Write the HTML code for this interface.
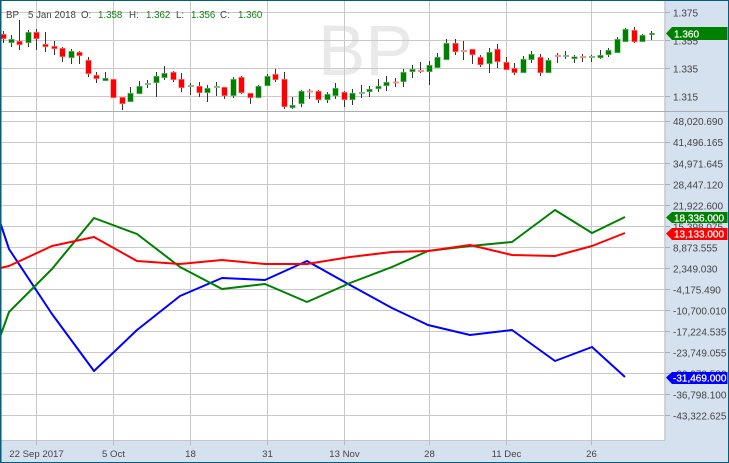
<!DOCTYPE html>
<html>
<head>
<meta charset="utf-8">
<style>
html,body{margin:0;padding:0;background:#fff;width:729px;height:463px;overflow:hidden}
svg{display:block}
text{font-family:"Liberation Sans",sans-serif;font-size:10px;fill:#444}
.g{fill:#0d860d}
.t{fill:#fff;font-size:10px;font-weight:normal;stroke:#fff;stroke-width:.25px}
.c{text-anchor:middle;font-size:9.6px}
.h{font-size:9.7px}
</style>
</head>
<body>
<svg width="729" height="463" viewBox="0 0 729 463" xmlns="http://www.w3.org/2000/svg">
<rect x="0" y="0" width="729" height="463" fill="#fff"/>
<text x="318" y="75" style="font-size:71px;fill:#e9e9e9">BP</text>

<!-- grid -->
<path stroke="#c9c9c9" stroke-width="1" fill="none" d="M0 12.5H665M0 40.5H665M0 68.5H665M0 96.5H665
M0 121.5H665M0 142.5H665M0 163.5H665M0 184.5H665M0 205.5H665M0 226.5H665M0 247.5H665M0 268.5H665M0 289.5H665M0 310.5H665M0 331.5H665M0 352.5H665M0 373.5H665M0 394.5H665M0 415.5H665
M36.5 0V445M113.5 0V445M190.5 0V445M267.5 0V445M344.5 0V445M429.5 0V445M506.5 0V445M591.5 0V445"/>
<rect x="0" y="111" width="665" height="1" fill="#9a9a9a"/>

<!-- axis panels -->
<rect x="0" y="440" width="729" height="23" fill="#d6e1ef"/>
<rect x="665" y="0" width="64" height="463" fill="#d6e1ef"/>
<rect x="0" y="440" width="665" height="1" fill="#c4c8cd"/>
<rect x="664" y="0" width="2" height="440" fill="#cfd3d8"/>
<rect x="0" y="111" width="729" height="1" fill="#a9adb2"/>
<path stroke="#b9bdc2" stroke-width="1" d="M36.5 440V445M113.5 440V445M190.5 440V445M267.5 440V445M344.5 440V445M429.5 440V445M506.5 440V445M591.5 440V445"/>
<path stroke="#a9adb2" stroke-width="1" d="M665 12.5H670M665 40.5H670M665 68.5H670M665 96.5H670M665 121.5H670M665 142.5H670M665 163.5H670M665 184.5H670M665 205.5H670M665 226.5H670M665 247.5H670M665 268.5H670M665 289.5H670M665 310.5H670M665 331.5H670M665 352.5H670M665 373.5H670M665 394.5H670M665 415.5H670"/>

<!-- wicks -->
<path stroke="#333" stroke-width="1" fill="none" d="M3.5 31V43M11.5 35V47M19.5 20V50M28.5 30V47M36.5 29V50M45.5 32V52M54.5 41V55M62.5 47V62M71.5 49V64M79.5 51V64M88.5 57V77M96.5 72V83M105.5 72V80M113.5 79V98M122.5 97V110M130.5 87V102M139.5 81V94M147.5 80V88M156.5 72V97M164.5 66V80M173.5 71V82M181.5 73V92M190.5 83V95M199.5 82V97M207.5 85V102M216.5 82V96M224.5 87V99M233.5 77V98M241.5 76V94M250.5 93V104M258.5 85V98M267.5 74V86M275.5 69V82M284.5 72V109M292.5 97V109M301.5 90V107M309.5 89V99M318.5 90V103M327.5 92V103M335.5 83V99M344.5 91V107M352.5 89V105M361.5 85V98M369.5 86V97M378.5 79V92M386.5 76V91M395.5 78V87M403.5 69V87M412.5 65V78M420.5 62V73M429.5 61V85M437.5 53V68M446.5 39V60M455.5 39V55M463.5 41V60M472.5 49V64M480.5 55V67M489.5 48V73M497.5 44V68M506.5 57V70M514.5 63V75M523.5 56V73M531.5 51V63M540.5 54V76M548.5 58V73M557.5 53V63M565.5 51V59M574.5 55V63M582.5 54V62M591.5 55V62M600.5 50V59M608.5 48V57M617.5 37V53M625.5 28V42M634.5 27V43M642.5 34V42M651.5 31V40"/>

<!-- red bodies -->
<path fill="#ff0000" stroke="#ff9a9a" stroke-width="1.2" style="paint-order:stroke" d="M1 34.5h5v4h-5zM17 41.5h5v3h-5zM34 32.5h5v6h-5zM43 44.5h5v2h-5zM52 46.5h5v2h-5zM60 48.5h5v8h-5zM77 52.5h5v3h-5zM86 60.5h5v13h-5zM94 75.5h5v3h-5zM111 79.5h5v18h-5zM120 97.5h5v6h-5zM171 72.5h5v7h-5zM179 79.5h5v8h-5zM197 86.5h5v6h-5zM222 87.5h5v8h-5zM239 77.5h5v15h-5zM248 93.5h5v4h-5zM273 74.5h5v5h-5zM282 79.5h5v27h-5zM316 91.5h5v8h-5zM342 92.5h5v7h-5zM453 43.5h5v8h-5zM470 49.5h5v5h-5zM478 57.5h5v7h-5zM495 49.5h5v12h-5zM504 62.5h5v7h-5zM512 68.5h5v4h-5zM538 57.5h5v15h-5zM632 30.5h5v11h-5z"/>
<!-- green bodies -->
<path fill="#008000" stroke="#8fc98f" stroke-width="1.2" style="paint-order:stroke" d="M9 39.5h5v3h-5zM26 32.5h5v10h-5zM69 51.5h5v6h-5zM103 78.5h5v2h-5zM128 93.5h5v8h-5zM137 86.5h5v7h-5zM154 76.5h5v6h-5zM162 73.5h5v4h-5zM205 88.5h5v4h-5zM231 79.5h5v16h-5zM256 86.5h5v11h-5zM265 76.5h5v9h-5zM290 105.5h5v2h-5zM299 91.5h5v12h-5zM325 94.5h5v5h-5zM333 88.5h5v7h-5zM350 93.5h5v6h-5zM367 89.5h5v2h-5zM376 86.5h5v2h-5zM384 82.5h5v3h-5zM401 72.5h5v9h-5zM410 69.5h5v2h-5zM427 65.5h5v6h-5zM435 57.5h5v10h-5zM444 43.5h5v16h-5zM487 52.5h5v11h-5zM521 59.5h5v13h-5zM529 54.5h5v5h-5zM546 60.5h5v12h-5zM572 57h5v1.5h-5zM598 55.5h5v2h-5zM606 50.5h5v4h-5zM615 39.5h5v13h-5zM623 29.5h5v12h-5zM640 35.5h5v6h-5z"/>
<!-- thin -->
<path fill="#ff8f8f" d="M307 90.5h6v2h-6zM393 81.5h6v2h-6zM418 70h6v2h-6zM461 50h6v2h-6zM555 55h6v2h-6zM580 56h6v2h-6z"/>
<path fill="#7fbf7f" d="M145 83h6v2h-6zM188 85h6v2h-6zM214 86h6v2h-6zM359 92h6v2h-6zM563 55h6v2h-6zM589 56h6v2h-6zM649 33h6v2h-6z"/>
<path fill="#008000" d="M650 33.5h4v1h-4z"/>

<!-- indicator lines -->
<g fill="none" stroke-width="2" stroke-linejoin="round">
<polyline stroke="#0000ff" points="0,222 9,249 52,314 94,371 137,330 180,296 222,278 265,280 307,261 350,285 392,308 428,325 470,335 512,330 555,361 592,347 625,377"/>
<polyline stroke="#008000" points="0,337 9,312 52,269 94,218 137,234 180,267 222,289 265,284 307,302 350,283 392,267 428,251 470,246 512,242 555,210 592,233 625,217"/>
<polyline stroke="#ff0000" points="0,268 9,266 52,246 94,237 137,261 180,264 222,260 265,264 307,264 350,257 392,252 428,251 470,245 512,255 555,256 592,246 625,233"/>
</g>

<!-- right labels -->
<text x="673" y="16.5">1.375</text>
<text x="673" y="44.5">1.355</text>
<text x="673" y="72.5">1.335</text>
<text x="673" y="100.5">1.315</text>
<text x="673" y="125">48,020.690</text>
<text x="673" y="146">41,496.165</text>
<text x="673" y="167.5">34,971.645</text>
<text x="673" y="188.5">28,447.120</text>
<text x="673" y="209.5">21,922.600</text>
<text x="673" y="230.5">15,398.075</text>
<text x="673" y="251.5">8,873.555</text>
<text x="673" y="272.5">2,349.030</text>
<text x="673" y="293.5">-4,175.490</text>
<text x="673" y="314.5">-10,700.010</text>
<text x="673" y="335.5">-17,224.535</text>
<text x="673" y="356.5">-23,749.055</text>
<text x="673" y="377.5">-30,273.580</text>
<text x="673" y="398.5">-36,798.100</text>
<text x="673" y="419.5">-43,322.625</text>

<!-- bottom labels -->
<g>
<text class="c" x="36.5" y="457">22 Sep 2017</text>
<text class="c" x="113.5" y="457">5 Oct</text>
<text class="c" x="190.5" y="457">18</text>
<text class="c" x="267.5" y="457">31</text>
<text class="c" x="344.5" y="457">13 Nov</text>
<text class="c" x="429.5" y="457">28</text>
<text class="c" x="506.5" y="457">11 Dec</text>
<text class="c" x="591.5" y="457">26</text>
</g>

<!-- value tags -->
<path fill="#008000" d="M666 33.5L672 27H727.5V40H672z"/>
<text class="t" x="674" y="37.5">1.360</text>
<path fill="#008000" d="M666 217.5L672 212H727.5V223H672z"/>
<text class="t" x="674" y="221.5">18,336.000</text>
<path fill="#ff0000" d="M666 233.5L672 228H727.5V240H672z"/>
<text class="t" x="674" y="237.5">13,133.000</text>
<path fill="#0000ff" d="M666 377.5L672 372H727.5V384H672z"/>
<text class="t" x="673" y="381.5">-31,469.000</text>

<!-- title -->
<text class="h" x="6" y="18">BP</text>
<text class="h" x="28" y="18">5 Jan 2018</text>
<text class="h" x="81" y="18">O:</text>
<text class="g h" x="98" y="18">1.358</text>
<text class="h" x="129" y="18">H:</text>
<text class="g h" x="146" y="18">1.362</text>
<text class="h" x="176" y="18">L:</text>
<text class="g h" x="191" y="18">1.356</text>
<text class="h" x="220" y="18">C:</text>
<text class="g h" x="238" y="18">1.360</text>

<!-- frame -->
<rect x="0" y="0" width="729" height="1" fill="#005f7f"/>
<rect x="0" y="462" width="729" height="1" fill="#005f7f"/>
<rect x="0" y="0" width="1.5" height="463" fill="#005f7f"/>
<rect x="728" y="0" width="1" height="463" fill="#005f7f"/>
</svg>
</body>
</html>
